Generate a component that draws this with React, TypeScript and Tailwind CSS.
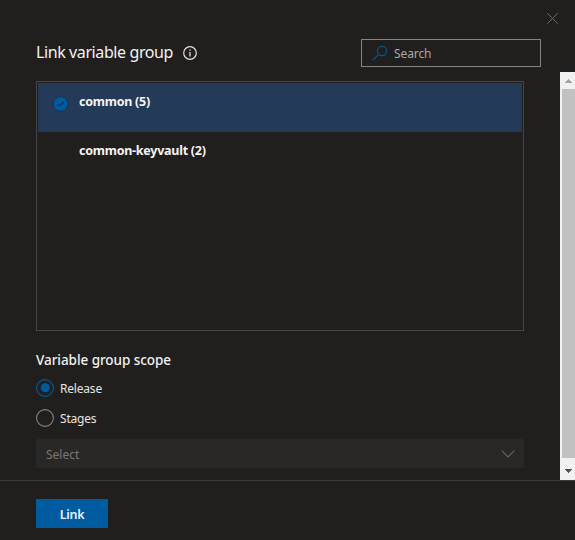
import React from "react";

function Header() {
  return (
    <header className="h-[72px] shrink-0">
      <div className="flex h-[39px] justify-end pt-[13px] pr-[17px]">
        <button aria-label="Close" className="h-[11px] w-[11px]">
          <svg width="11" height="11" viewBox="0 0 11 11" className="block" fill="none" stroke="#6a6967">
            <path d="M0.3 0.3L10.7 10.7M10.7 0.3L0.3 10.7" />
          </svg>
        </button>
      </div>
      <div className="flex h-7 items-center pr-[34px] pl-9">
        <h1 className="-mt-[2px] text-[16px] leading-6 font-normal tracking-[-0.4px] whitespace-nowrap text-[#f4f3f2]">
          Link variable group
        </h1>
        <svg width="14" height="14" viewBox="0 0 14 14" className="ml-[10px] block" fill="none" stroke="#e2e1df">
          <circle cx="7" cy="7" r="6.3" strokeWidth="1.2" />
          <path d="M7 6v4.6M7 3.5v1.3" strokeWidth="1.3" />
        </svg>
        <div className="ml-auto flex h-7 w-[180px] items-center border border-[#858482] pl-[10px]">
          <svg width="16" height="16" viewBox="0 0 16 16" className="block" fill="none" stroke="#005a9e" strokeWidth="1.1">
            <circle cx="10" cy="6" r="4.6" />
            <path d="M6.7 9.3L0.8 15.2" />
          </svg>
          <span className="mt-[2px] ml-[6px] text-[12px] leading-4 tracking-[-0.1px] text-[#a9a8a6]">Search</span>
        </div>
      </div>
    </header>
  );
}

function GroupList() {
  return (
    <ul className="mt-[9px] h-[250px] w-[488px] border border-[#484644] p-px text-[12.5px] leading-4 font-bold tracking-[-0.25px] text-[#f5f4f3]">
      <li className="flex h-[49px] bg-[#233b58] pt-[11px]">
        <svg width="16" height="16" viewBox="0 0 16 16" className="mt-[2px] ml-[15px] block">
          <circle cx="7.6" cy="8" r="7.3" fill="#005ba1" stroke="#1e3044" strokeWidth="0.8" />
          <path d="M4.6 8.1l2 2 3.9-4" fill="none" stroke="#1b2c3e" strokeWidth="1.3" />
        </svg>
        <span className="ml-[10px]">common (5)</span>
      </li>
      <li className="flex h-[49px] pt-[11px] pl-[41px]">common-keyvault (2)</li>
    </ul>
  );
}

function Radio({ label, checked }: { label: string; checked?: boolean }) {
  return (
    <label className="flex h-[18px] items-center">
      <svg width="18" height="18" viewBox="0 0 18 18" className="block" fill="none">
        <circle cx="9" cy="9" r="8.4" stroke={checked ? "#005ba1" : "#858482"} strokeWidth="1.1" />
        {checked && <circle cx="9.3" cy="8.7" r="4.5" fill="#005ba1" />}
        {checked && <rect x="9" y="8" width="1" height="1" fill="#123049" />}
      </svg>
      <span className="mt-[2px] ml-[6px] text-[12px] leading-4 tracking-[-0.2px] text-[#e6e5e3]">{label}</span>
    </label>
  );
}

function Scrollbar() {
  return (
    <div className="flex w-[15px] shrink-0 flex-col bg-[#f1f1f1]">
      <div className="flex h-[17px] justify-center pt-[7px] pl-[2px]">
        <svg width="7" height="4" viewBox="0 0 7 4" className="block" shapeRendering="crispEdges">
          <path d="M3 0h1v1h1v1h1v1h1v1H0V3h1V2h1V1h1z" fill="#a3a3a3" />
        </svg>
      </div>
      <div className="ml-[2px] h-[369px] bg-[#c1c1c1]" />
      <div className="flex justify-center pt-[11px] pl-[2px]">
        <svg width="7" height="4" viewBox="0 0 7 4" className="block" shapeRendering="crispEdges">
          <path d="M0 0h7v1H6v1H5v1H4v1H3V3H2V2H1V1H0z" fill="#505050" />
        </svg>
      </div>
    </div>
  );
}

export default function App() {
  return (
    <div className="flex h-[540px] w-[575px] flex-col overflow-hidden bg-[#201f1e] font-['Noto_Sans','Open_Sans',sans-serif]">
      <Header />
      <div className="flex h-[408px] shrink-0">
        <main className="flex-1 pl-9">
          <GroupList />
          <h2 className="mt-[19px] text-[13.5px] leading-5 font-medium tracking-[-0.05px] text-[#f3f2f1]">Variable group scope</h2>
          <div className="mt-[9px] flex flex-col gap-3">
            <Radio label="Release" checked />
            <Radio label="Stages" />
          </div>
          <div className="mt-3 flex h-[29px] w-[488px] items-center justify-between rounded-[2px] bg-[#292827] pr-[9px] pl-[10px]">
            <span className="mt-[2px] text-[12px] leading-4 text-[#797775]">Select</span>
            <svg width="14" height="8" viewBox="0 0 14 8" className="block" fill="none" stroke="#666563" strokeWidth="1.1">
              <path d="M0.7 0.7L7 7L13.3 0.7" />
            </svg>
          </div>
        </main>
        <Scrollbar />
      </div>
      <footer className="flex-1 border-t border-[#3b3a39] pt-[18px] pl-9">
        <button className="flex h-[29px] w-[72px] items-center justify-center bg-[#005ba1] pt-[3px] text-[12.5px] leading-4 font-semibold tracking-[-0.25px] text-[#eaf2f8]">
          Link
        </button>
      </footer>
    </div>
  );
}
